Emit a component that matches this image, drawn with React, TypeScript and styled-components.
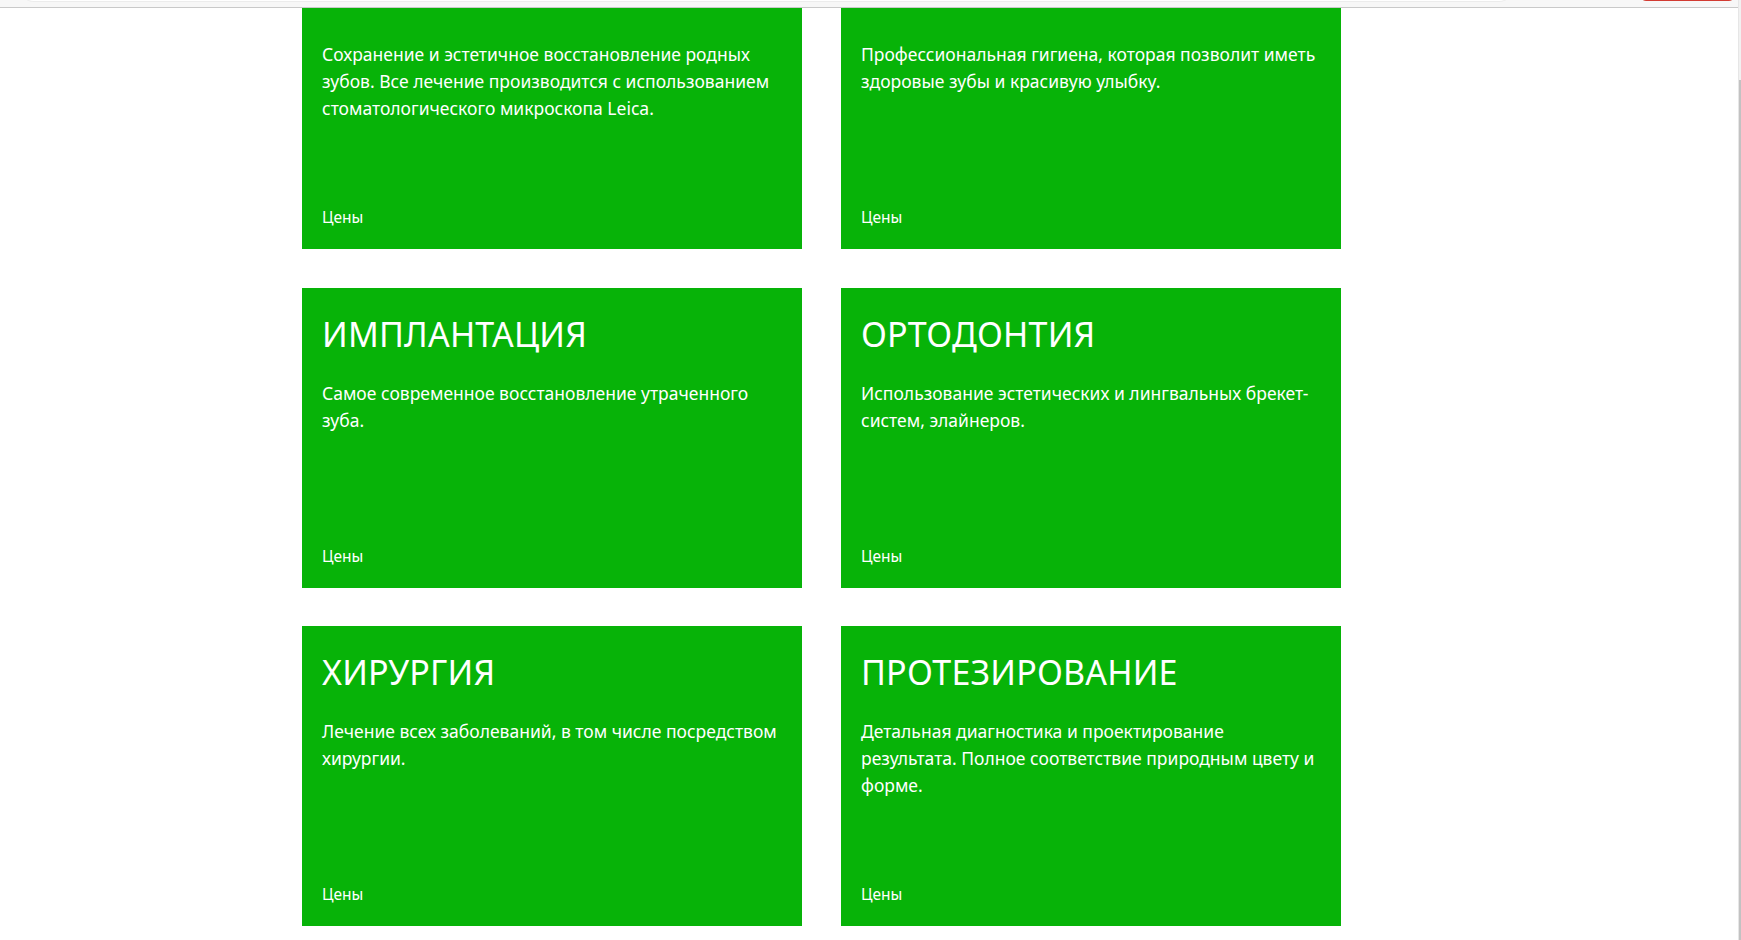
import React, { useLayoutEffect, useRef } from "react";
import styled, { createGlobalStyle } from "styled-components";

const GlobalStyle = createGlobalStyle`
  html, body {
    margin: 0;
    padding: 0;
    overflow: hidden;
    background: #ffffff;
  }
  * { box-sizing: border-box; }
`;

const Scroller = styled.div`
  height: 100vh;
  overflow-y: scroll;
  background: #ffffff;
  font-family: "Noto Sans", "Open Sans", sans-serif;
  scrollbar-width: none;

  &::-webkit-scrollbar {
    display: none;
  }
`;

const ScrollTrack = styled.div`
  position: fixed;
  top: 0;
  right: 0;
  bottom: 0;
  width: 3px;
  z-index: 20;
  background: #f1f1f1;
  border-left: 1px solid #e6e6e6;
  display: flex;
  flex-direction: column;
  justify-content: flex-end;
`;

const ScrollThumb = styled.div`
  height: 860px;
  background: #c2c2c2;
`;

const TopBar = styled.header`
  position: sticky;
  top: -32px;
  z-index: 10;
  height: 40px;
  background: #f7f7f7;
  border-bottom: 1px solid #c9c9c9;
  display: flex;
  align-items: flex-end;
  justify-content: space-between;
  padding: 0 6px 4px 20px;
`;

const AddressField = styled.div`
  width: 1493px;
  height: 30px;
  margin-bottom: 1px;
  background: #ffffff;
  border-radius: 0 0 14px 14px;
  border-bottom: 1px solid #ececec;
`;

const AccountButton = styled.div`
  width: 95px;
  height: 30px;
  margin-bottom: 2px;
  border: 1px solid #d23b32;
  border-radius: 6px;
  background: #ffffff;
`;

const Grid = styled.main`
  display: grid;
  grid-template-columns: repeat(2, 500px);
  column-gap: 39px;
  row-gap: 38.5px;
  padding: 0 0 14px 302px;
`;

const Card = styled.article`
  height: 300px;
  background: #07b308;
  color: #ffffff;
  display: flex;
  flex-direction: column;
  padding: 26px 20px 21px;
`;

const Title = styled.h2`
  margin: 0;
  font-size: 34px;
  line-height: 40px;
  font-weight: 400;
  letter-spacing: 0.2px;
`;

const Description = styled.p`
  margin: 26px 0 0;
  font-size: 17.5px;
  line-height: 27px;
  white-space: nowrap;
`;

const PriceLink = styled.a`
  margin-top: auto;
  font-size: 15.5px;
  line-height: 22px;
  color: #ffffff;
  text-decoration: none;
  align-self: flex-start;
`;

type Service = { title: string; lines: string[] };

const services: Service[] = [
  {
    title: "ТЕРАПИЯ",
    lines: [
      "Сохранение и эстетичное восстановление родных",
      "зубов. Все лечение производится с использованием",
      "стоматологического микроскопа Leica.",
    ],
  },
  {
    title: "ГИГИЕНА",
    lines: [
      "Профессиональная гигиена, которая позволит иметь",
      "здоровые зубы и красивую улыбку.",
    ],
  },
  {
    title: "ИМПЛАНТАЦИЯ",
    lines: ["Самое современное восстановление утраченного", "зуба."],
  },
  {
    title: "ОРТОДОНТИЯ",
    lines: ["Использование эстетических и лингвальных брекет-", "систем, элайнеров."],
  },
  {
    title: "ХИРУРГИЯ",
    lines: ["Лечение всех заболеваний, в том числе посредством", "хирургии."],
  },
  {
    title: "ПРОТЕЗИРОВАНИЕ",
    lines: [
      "Детальная диагностика и проектирование",
      "результата. Полное соответствие природным цвету и",
      "форме.",
    ],
  },
];

export default function App() {
  const ref = useRef<HTMLDivElement>(null);

  useLayoutEffect(() => {
    if (ref.current) ref.current.scrollTop = ref.current.scrollHeight;
  }, []);

  return (
    <>
      <GlobalStyle />
      <Scroller ref={ref}>
        <TopBar>
          <AddressField />
          <AccountButton />
        </TopBar>
        <Grid>
          {services.map((s) => (
            <Card key={s.title}>
              <Title>{s.title}</Title>
              <Description>
                {s.lines.map((line, i) => (
                  <React.Fragment key={i}>
                    {i > 0 && <br />}
                    {line}
                  </React.Fragment>
                ))}
              </Description>
              <PriceLink href="#">Цены</PriceLink>
            </Card>
          ))}
        </Grid>
      </Scroller>
      <ScrollTrack aria-hidden="true">
        <ScrollThumb />
      </ScrollTrack>
    </>
  );
}
